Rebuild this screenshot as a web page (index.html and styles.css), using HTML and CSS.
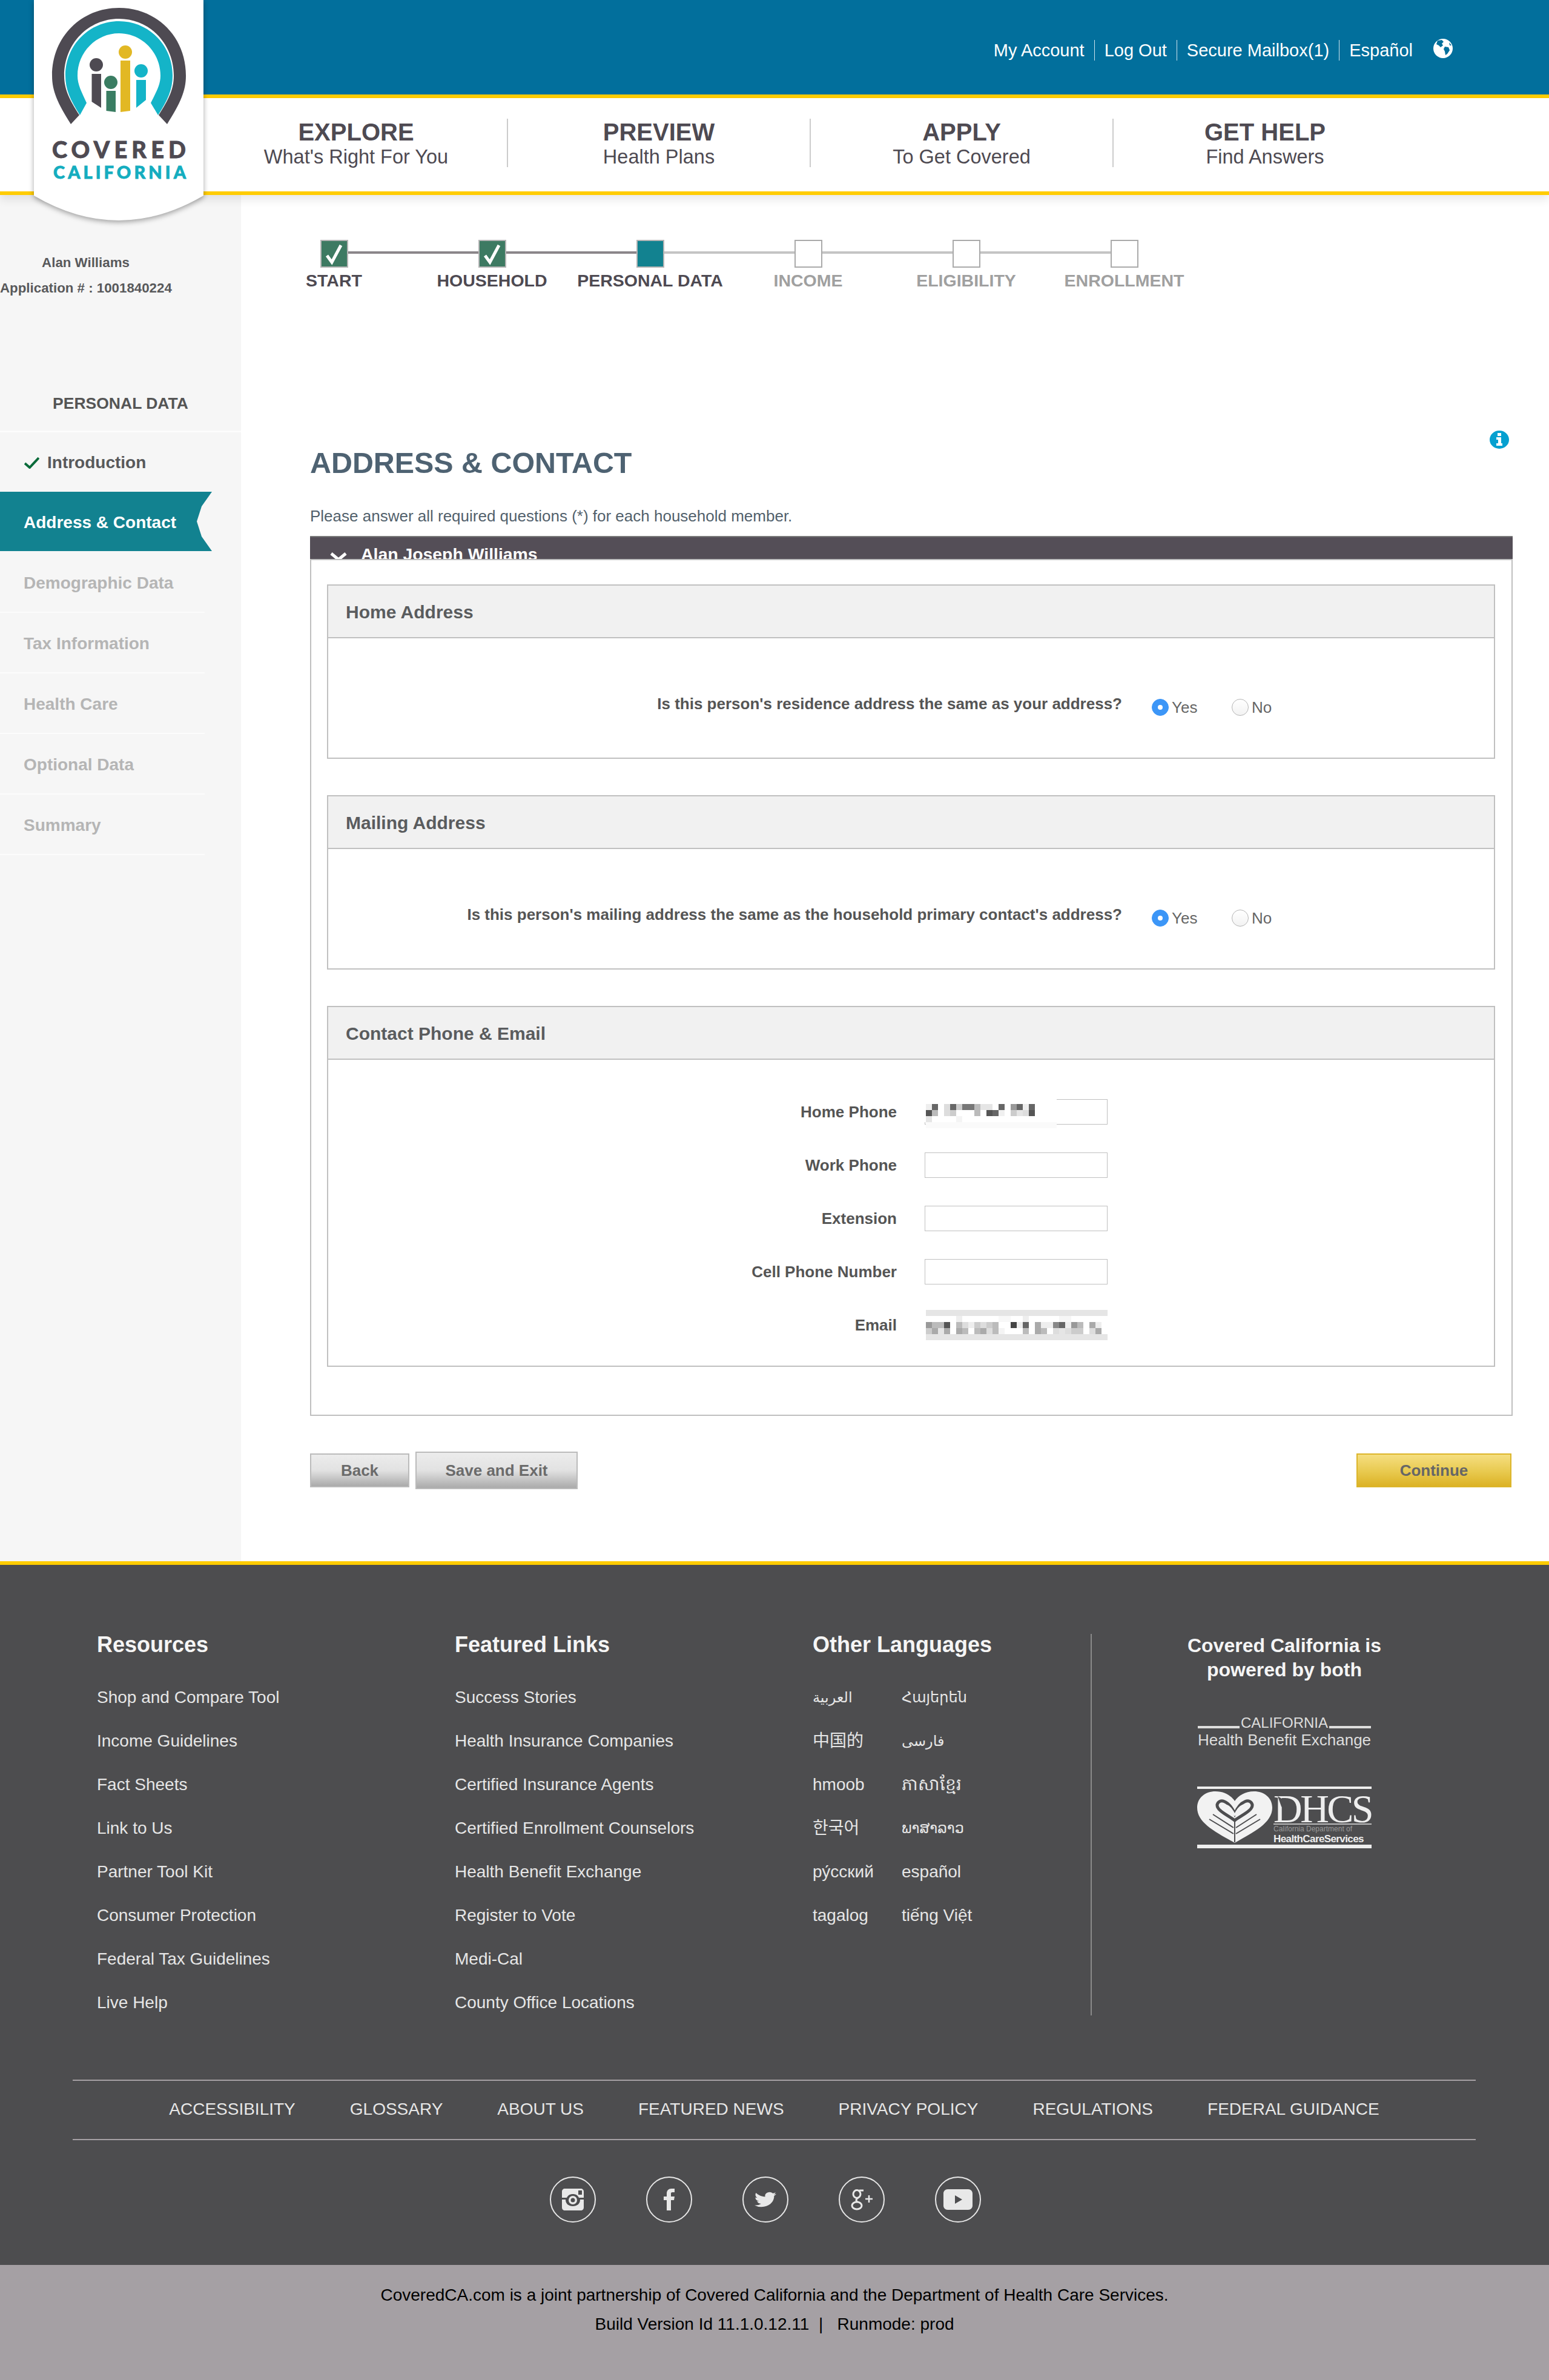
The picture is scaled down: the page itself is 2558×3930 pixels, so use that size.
FILE: index.html
```html
<!DOCTYPE html>
<html lang="en">
<head>
<meta charset="utf-8">
<title>Covered California - Address &amp; Contact</title>
<link rel="stylesheet" href="styles.css">
</head>
<body>
<header class="site-header">
  <svg class="logo" viewBox="56 0 280 375" width="280" height="375" aria-label="Covered California">
    <path class="logo-shield" d="M56 0H336V323Q196 405 56 323Z"/>
    <path fill="#4e4a52" d="M117 205C95 170 86 150 86 125C86 60 135 13 196.5 13C258 13 307 60 307 125C307 150 298 170 276 205L262 190C278 165 287 148 287 125C287 72 247 31 196.5 31C146 31 106 72 106 125C106 148 115 165 131 190Z"/>
    <path fill="#14b4c8" d="M132 190C116 165 108 148 108 125C108 74 148 35 196.5 35C245 35 285 74 285 125C285 148 277 165 261 190L249 170C258 152 265 140 265 125C265 86 234 55 196.5 55C159 55 128 86 128 125C128 140 135 152 143 170Z"/>
    <circle cx="159" cy="107" r="11" fill="#4e4a52"/>
    <path fill="#4e4a52" d="M151.500 122H167V178L151.500 168Z"/>
    <circle cx="183" cy="136" r="11" fill="#3a7d62"/>
    <path fill="#3a7d62" d="M175.500 150H191V185L175.500 183Z"/>
    <circle cx="207" cy="86" r="11" fill="#e2b824"/>
    <path fill="#e2b824" d="M199 100H215V183L199 185Z"/>
    <circle cx="233" cy="117" r="11" fill="#14b4c8"/>
    <path fill="#14b4c8" d="M225 132H241V165L225 178Z"/>
    <text class="logo-covered" x="86" y="261" textLength="221" lengthAdjust="spacing">COVERED</text>
    <text class="logo-california" x="88" y="295" textLength="219" lengthAdjust="spacing">CALIFORNIA</text>
  </svg>
  <div class="topbar">
    <nav class="top-links">
      <a class="top-link">My Account</a>
      <a class="top-link">Log Out</a>
      <a class="top-link">Secure Mailbox(1)</a>
      <a class="top-link top-link-last">Español</a>
      <svg class="globe" viewBox="0 0 32 32" width="32" height="32" aria-hidden="true">
        <circle cx="16" cy="16" r="16" fill="#fff"/>
        <path fill="#026f9c" d="M7 3L14 2L17 5L14 8L16 11L12 14L9 11L5 9ZM19 13L25 14L27 19L23 25L20 27L19 21L17 17ZM26 6L30 11L27 11Z"/>
      </svg>
    </nav>
  </div>
  <nav class="main-nav">
    <a class="nav-col"><strong class="nav-title">EXPLORE</strong><span class="nav-sub">What's Right For You</span></a>
    <a class="nav-col"><strong class="nav-title">PREVIEW</strong><span class="nav-sub">Health Plans</span></a>
    <a class="nav-col"><strong class="nav-title">APPLY</strong><span class="nav-sub">To Get Covered</span></a>
    <a class="nav-col nav-col-last"><strong class="nav-title">GET HELP</strong><span class="nav-sub">Find Answers</span></a>
  </nav>
</header>

<div class="layout">
  <aside class="sidebar">
    <div class="user-info">
      <div>Alan Williams</div>
      <div>Application # : 1001840224</div>
    </div>
    <h2 class="side-heading">PERSONAL DATA</h2>
    <ul class="side-list">
      <li class="side-item side-done">
        <svg class="side-check" viewBox="0 0 25 20" width="25" height="20" aria-hidden="true"><path d="M1 11L9 18L24 2" fill="none" stroke="#0a6b3a" stroke-width="4"/></svg>
        Introduction
      </li>
      <li class="side-item side-active">Address &amp; Contact</li>
      <li class="side-item">Demographic Data</li>
      <li class="side-item">Tax Information</li>
      <li class="side-item">Health Care</li>
      <li class="side-item">Optional Data</li>
      <li class="side-item">Summary</li>
    </ul>
  </aside>

  <main class="content">
    <ol class="stepper">
      <li class="step step-done"><span class="step-box"><svg viewBox="0 0 42 42" width="42" height="42" aria-hidden="true"><path d="M9 24L17 35L32 7" fill="none" stroke="#fff" stroke-width="5"/></svg></span><span class="step-label">START</span></li>
      <li class="step step-done"><span class="step-box"><svg viewBox="0 0 42 42" width="42" height="42" aria-hidden="true"><path d="M9 24L17 35L32 7" fill="none" stroke="#fff" stroke-width="5"/></svg></span><span class="step-label">HOUSEHOLD</span></li>
      <li class="step step-current"><span class="step-box"></span><span class="step-label">PERSONAL DATA</span></li>
      <li class="step"><span class="step-box"></span><span class="step-label">INCOME</span></li>
      <li class="step"><span class="step-box"></span><span class="step-label">ELIGIBILITY</span></li>
      <li class="step step-last"><span class="step-box"></span><span class="step-label">ENROLLMENT</span></li>
    </ol>

    <div class="title-row">
      <h1 class="page-title">ADDRESS &amp; CONTACT</h1>
      <svg class="info-icon" viewBox="0 0 32 30" width="32" height="30" aria-hidden="true">
        <ellipse cx="16" cy="15" rx="16" ry="15" fill="#06a0d0"/>
        <path fill="#fff" d="M13 4H19V9H13ZM11 11H19V21H21V25H11V21H14V15H11Z"/>
      </svg>
    </div>
    <p class="instructions">Please answer all required questions (*) for each household member.</p>

    <div class="member-bar">
      <svg class="chevron" viewBox="0 0 28 16" width="28" height="16" aria-hidden="true"><path d="M2 2L14 12L26 2" fill="none" stroke="#fff" stroke-width="5"/></svg>
      <span class="member-name">Alan Joseph Williams</span>
    </div>

    <div class="member-panel">
      <section class="card card-short">
        <h3 class="card-head">Home Address</h3>
        <div class="question">
          <span class="q-label">Is this person's residence address the same as your address?</span>
          <span class="radio-opt"><i class="radio radio-on"></i>Yes</span>
          <span class="radio-opt"><i class="radio"></i>No</span>
        </div>
      </section>
      <section class="card card-short">
        <h3 class="card-head">Mailing Address</h3>
        <div class="question">
          <span class="q-label">Is this person's mailing address the same as the household primary contact's address?</span>
          <span class="radio-opt"><i class="radio radio-on"></i>Yes</span>
          <span class="radio-opt"><i class="radio"></i>No</span>
        </div>
      </section>
      <section class="card card-tall">
        <h3 class="card-head">Contact Phone &amp; Email</h3>
        <div class="fields">
          <div class="field">
            <span class="f-label">Home Phone</span>
            <span class="f-input">
              <svg class="blur-phone" viewBox="0 0 218 48" width="218" height="48" shape-rendering="crispEdges" aria-hidden="true">
                <rect width="218" height="38" fill="#fff"/>
                <rect x="2" y="38" width="216" height="10" fill="#fafafa"/>
                <rect x="2" y="8" width="10" height="10" fill="#eee"/><rect x="12" y="8" width="10" height="10" fill="#666"/><rect x="32" y="8" width="10" height="10" fill="#ddd"/><rect x="42" y="8" width="10" height="10" fill="#666"/><rect x="52" y="8" width="10" height="10" fill="#ccc"/><rect x="62" y="8" width="20" height="10" fill="#777"/><rect x="82" y="8" width="10" height="10" fill="#bbb"/><rect x="92" y="8" width="20" height="10" fill="#e5e5e5"/><rect x="122" y="8" width="10" height="10" fill="#666"/><rect x="142" y="8" width="10" height="10" fill="#999"/><rect x="152" y="8" width="10" height="10" fill="#666"/><rect x="162" y="8" width="10" height="10" fill="#eee"/><rect x="172" y="8" width="10" height="10" fill="#666"/>
                <rect x="2" y="18" width="10" height="10" fill="#555"/><rect x="12" y="18" width="10" height="10" fill="#bbb"/><rect x="32" y="18" width="10" height="10" fill="#ddd"/><rect x="42" y="18" width="10" height="10" fill="#ccc"/><rect x="82" y="18" width="10" height="10" fill="#bbb"/><rect x="102" y="18" width="10" height="10" fill="#555"/><rect x="112" y="18" width="10" height="10" fill="#666"/><rect x="122" y="18" width="10" height="10" fill="#f0f0f0"/><rect x="142" y="18" width="10" height="10" fill="#ccc"/><rect x="152" y="18" width="10" height="10" fill="#e5e5e5"/><rect x="162" y="18" width="10" height="10" fill="#ddd"/><rect x="172" y="18" width="10" height="10" fill="#555"/>
                <rect x="2" y="28" width="10" height="10" fill="#e5e5e5"/><rect x="52" y="28" width="10" height="10" fill="#f4f4f4"/>
              </svg>
            </span>
          </div>
          <div class="field"><span class="f-label">Work Phone</span><span class="f-input"></span></div>
          <div class="field"><span class="f-label">Extension</span><span class="f-input"></span></div>
          <div class="field"><span class="f-label">Cell Phone Number</span><span class="f-input"></span></div>
          <div class="field field-email">
            <span class="f-label">Email</span>
            <svg class="blur-email" viewBox="0 0 300 50" width="300" height="50" shape-rendering="crispEdges" aria-hidden="true">
              <rect width="300" height="10" fill="#e5e5e5"/><rect y="40" width="300" height="10" fill="#e5e5e5"/>
              <rect x="50" y="10" width="10" height="10" fill="#eee"/><rect x="120" y="10" width="20" height="10" fill="#f8f8f8"/><rect x="160" y="10" width="10" height="10" fill="#eee"/><rect x="220" y="10" width="20" height="10" fill="#f6f6f6"/>
              <rect y="20" width="10" height="10" fill="#999"/><rect x="10" y="20" width="20" height="10" fill="#bbb"/><rect x="30" y="20" width="10" height="10" fill="#555"/><rect x="50" y="20" width="10" height="10" fill="#bbb"/><rect x="60" y="20" width="10" height="10" fill="#ddd"/><rect x="70" y="20" width="10" height="10" fill="#eee"/><rect x="80" y="20" width="10" height="10" fill="#ccc"/><rect x="90" y="20" width="10" height="10" fill="#ddd"/><rect x="100" y="20" width="10" height="10" fill="#ccc"/><rect x="110" y="20" width="10" height="10" fill="#bbb"/><rect x="140" y="20" width="10" height="10" fill="#444"/><rect x="150" y="20" width="10" height="10" fill="#eee"/><rect x="160" y="20" width="10" height="10" fill="#666"/><rect x="180" y="20" width="10" height="10" fill="#aaa"/><rect x="190" y="20" width="20" height="10" fill="#eee"/><rect x="210" y="20" width="10" height="10" fill="#888"/><rect x="220" y="20" width="10" height="10" fill="#666"/><rect x="230" y="20" width="10" height="10" fill="#eee"/><rect x="240" y="20" width="10" height="10" fill="#999"/><rect x="250" y="20" width="10" height="10" fill="#bbb"/><rect x="270" y="20" width="10" height="10" fill="#aaa"/><rect x="280" y="20" width="10" height="10" fill="#eee"/>
              <rect y="30" width="10" height="10" fill="#ccc"/><rect x="10" y="30" width="10" height="10" fill="#aaa"/><rect x="20" y="30" width="10" height="10" fill="#e5e5e5"/><rect x="30" y="30" width="10" height="10" fill="#aaa"/><rect x="50" y="30" width="10" height="10" fill="#aaa"/><rect x="60" y="30" width="10" height="10" fill="#bbb"/><rect x="80" y="30" width="10" height="10" fill="#bbb"/><rect x="90" y="30" width="10" height="10" fill="#aaa"/><rect x="100" y="30" width="10" height="10" fill="#ddd"/><rect x="110" y="30" width="10" height="10" fill="#bbb"/><rect x="120" y="30" width="10" height="10" fill="#f4f4f4"/><rect x="160" y="30" width="10" height="10" fill="#bbb"/><rect x="180" y="30" width="10" height="10" fill="#aaa"/><rect x="190" y="30" width="10" height="10" fill="#bbb"/><rect x="210" y="30" width="10" height="10" fill="#ddd"/><rect x="220" y="30" width="10" height="10" fill="#e5e5e5"/><rect x="230" y="30" width="10" height="10" fill="#ddd"/><rect x="240" y="30" width="20" height="10" fill="#ccc"/><rect x="270" y="30" width="10" height="10" fill="#ddd"/><rect x="280" y="30" width="10" height="10" fill="#aaa"/>
            </svg>
          </div>
        </div>
      </section>
    </div>

    <div class="actions">
      <button class="btn btn-back">Back</button>
      <button class="btn btn-save">Save and Exit</button>
      <button class="btn btn-continue">Continue</button>
    </div>
  </main>
</div>

<footer class="site-footer">
  <div class="foot-cols">
    <div class="foot-col">
      <h4 class="foot-title">Resources</h4>
      <ul class="foot-list">
        <li>Shop and Compare Tool</li><li>Income Guidelines</li><li>Fact Sheets</li><li>Link to Us</li><li>Partner Tool Kit</li><li>Consumer Protection</li><li>Federal Tax Guidelines</li><li>Live Help</li>
      </ul>
    </div>
    <div class="foot-col">
      <h4 class="foot-title">Featured Links</h4>
      <ul class="foot-list">
        <li>Success Stories</li><li>Health Insurance Companies</li><li>Certified Insurance Agents</li><li>Certified Enrollment Counselors</li><li>Health Benefit Exchange</li><li>Register to Vote</li><li>Medi-Cal</li><li>County Office Locations</li>
      </ul>
    </div>
    <div class="foot-col foot-col-lang">
      <h4 class="foot-title">Other Languages</h4>
      <ul class="foot-list foot-langs">
        <li class="lang-small">العربية</li><li class="lang-small">Հայերեն</li>
        <li>中国的</li><li class="lang-small">فارسی</li>
        <li>hmoob</li><li>ភាសាខ្មែរ</li>
        <li>한국어</li><li class="lang-small">ພາສາລາວ</li>
        <li>ру́сский</li><li>español</li>
        <li>tagalog</li><li>tiếng Việt</li>
      </ul>
    </div>
    <div class="foot-partners">
      <h4 class="partners-title">Covered California is powered by both</h4>
      <div class="chbe">
        <div class="chbe-top"><span class="chbe-rule"></span>CALIFORNIA<span class="chbe-rule"></span></div>
        <div class="chbe-name">Health Benefit Exchange</div>
      </div>
      <svg class="dhcs" viewBox="0 0 288 102" width="288" height="102" aria-label="DHCS">
        <rect width="288" height="4" fill="#eee"/>
        <rect y="96" width="288" height="6" fill="#eee"/>
        <path fill="#f2f2f2" d="M62 93C30 75 0 60 0 35C0 18 14 8 30 8C45 8 56 15 62 24C68 15 79 8 94 8C110 8 124 18 124 35C124 60 94 75 62 93Z"/>
        <path fill="none" stroke="#4d4d4f" stroke-width="5" d="M33 30C36 19 52 22 62 45C72 22 88 19 91 30C92 40 72 48 62 56C52 48 32 40 33 30Z"/>
        <path fill="#f2f2f2" d="M47 30C52 29 58 36 62 44C66 36 72 29 77 30C78 36 68 44 62 49C56 44 46 36 47 30Z"/>
        <path fill="none" stroke="#4d4d4f" stroke-width="2" d="M62 56V92M20 54L60 78M26 46L60 68M104 54L64 78M98 46L64 68"/>
        <text class="dhcs-letters" x="126" y="59">DHCS</text>
        <path fill="#4d4d4f" d="M133 16L143 22L146 40L139 33Z"/>
        <rect x="126" y="61" width="162" height="2" fill="#bbb"/>
        <text class="dhcs-tiny" x="126" y="74">California Department of</text>
        <text class="dhcs-small" x="126" y="92">HealthCareServices</text>
      </svg>
    </div>
  </div>

  <nav class="foot-nav">
    <a>ACCESSIBILITY</a><a>GLOSSARY</a><a>ABOUT US</a><a>FEATURED NEWS</a><a>PRIVACY POLICY</a><a>REGULATIONS</a><a>FEDERAL GUIDANCE</a>
  </nav>

  <div class="social">
    <a class="social-btn"><svg viewBox="0 0 36 36" width="36" height="36" aria-hidden="true"><path fill="#e8e8e8" fill-rule="evenodd" d="M5 0H31C34 0 36 2 36 5V15H28C26 11 23 9 18 9C13 9 10 11 8 15H0V5C0 2 2 0 5 0ZM27 3V10H33V3ZM0 18H6C6 25 11 29 18 29C25 29 30 25 30 18H36V31C36 34 34 36 31 36H5C2 36 0 34 0 31ZM18 12A7 7 0 1 1 18 26A7 7 0 1 1 18 12ZM18 15.500A3.500 3.500 0 1 0 18 22.500A3.500 3.500 0 1 0 18 15.500Z"/></svg></a>
    <a class="social-btn"><svg viewBox="0 0 24 36" width="24" height="36" aria-hidden="true"><path fill="#e8e8e8" d="M8 36V19H3V13H8V8C8 3 11 0 16 0H21V6H18C15 6 15 7 15 9V13H21L20 19H15V36Z"/></svg></a>
    <a class="social-btn"><svg viewBox="0 0 24 24" width="36" height="30" preserveAspectRatio="none" aria-hidden="true"><path fill="#e8e8e8" d="M23.953 4.570a10 10 0 01-2.825.775 4.958 4.958 0 002.163-2.723c-.951.555-2.005.959-3.127 1.184a4.920 4.920 0 00-8.384 4.482C7.690 8.095 4.067 6.130 1.640 3.162a4.822 4.822 0 00-.666 2.475c0 1.710.870 3.213 2.188 4.096a4.904 4.904 0 01-2.228-.616v.060a4.923 4.923 0 003.946 4.827 4.996 4.996 0 01-2.212.085 4.936 4.936 0 004.604 3.417 9.867 9.867 0 01-6.102 2.105c-.390 0-.779-.023-1.170-.067a13.995 13.995 0 007.557 2.209c9.053 0 13.998-7.496 13.998-13.985 0-.210 0-.420-.015-.630A9.935 9.935 0 0024 4.590z"/></svg></a>
    <a class="social-btn"><svg viewBox="0 0 36 36" width="36" height="36" aria-hidden="true"><g fill="none" stroke="#e8e8e8" stroke-width="3"><ellipse cx="10" cy="9" rx="6" ry="6.500"/><ellipse cx="10" cy="28" rx="8" ry="6"/><path d="M14 3H21M12 15C8 18 8 20 11 22"/><path stroke-width="2.500" d="M24 17H36M30 11V23"/></g></svg></a>
    <a class="social-btn"><svg viewBox="0 0 48 34" width="48" height="34" aria-hidden="true"><path fill="#e8e8e8" fill-rule="evenodd" d="M7 0H41C45 0 48 3 48 7V27C48 31 45 34 41 34H7C3 34 0 31 0 27V7C0 3 3 0 7 0ZM19 10V24L31 17Z"/></svg></a>
  </div>

  <div class="sub-footer">
    <p>CoveredCA.com is a joint partnership of Covered California and the Department of Health Care Services.</p>
    <p>Build Version Id 11.1.0.12.11&nbsp; |&nbsp;&nbsp; Runmode: prod</p>
  </div>
</footer>
</body>
</html>
```

FILE: styles.css
```css
* { box-sizing: border-box; }
html, body { margin: 0; padding: 0; }
body {
  width: 2558px;
  font-family: "Liberation Sans", "DejaVu Sans", "Noto Sans CJK SC", "Noto Sans", sans-serif;
  background: #fff;
  color: #4e4a52;
}
ul, ol { list-style: none; margin: 0; padding: 0; }
h1, h2, h3, h4, p { margin: 0; }

/* Header */
.site-header { position: relative; z-index: 3; }
.logo { position: absolute; left: 56px; top: 0; z-index: 5; overflow: visible; }
.logo-shield { fill: #fff; filter: drop-shadow(0 3px 4px rgba(0,0,0,.35)); }
.logo-covered { font: 900 38px "Lato", "Liberation Sans", sans-serif; fill: #4e4a52; stroke: #4e4a52; stroke-width: .8px; }
.logo-california { font: 900 29px "Lato", "Liberation Sans", sans-serif; fill: #14adbf; stroke: #14adbf; stroke-width: .8px; }
.topbar {
  height: 162px;
  background: #026f9c;
  border-bottom: 6px solid #ffcc00;
  padding: 66px 159px 0 0;
}
.top-links { display: flex; justify-content: flex-end; align-items: flex-start; color: #fff; }
.top-link {
  font-size: 29px;
  line-height: 34px;
  padding: 0 16px;
  border-right: 1px solid #cfe3ec;
}
.top-link-last { border-right: 0; }
.globe { margin: -2px 0 0 18px; }
.main-nav {
  display: flex;
  height: 160px;
  padding: 34px 0 0 339px;
  background: #fff;
  border-bottom: 6px solid #ffcc00;
  box-shadow: 0 8px 14px rgba(0,0,0,.09);
}
.nav-col {
  display: flex;
  flex-direction: column;
  align-items: center;
  width: 500px;
  height: 80px;
  border-right: 2px solid #ccc;
}
.nav-col-last { border-right: 0; }
.nav-title { font-size: 40px; line-height: 44px; font-weight: 700; }
.nav-sub { font-size: 32.5px; line-height: 38px; }

/* Layout */
.layout { display: flex; min-height: 2256px; }
.sidebar { flex: 0 0 398px; background: #f6f6f6; }
.user-info {
  width: 283px;
  padding-top: 91px;
  text-align: center;
  font-size: 22.3px;
  line-height: 42px;
  font-weight: 700;
  color: #58595b;
  white-space: nowrap;
}
.side-heading {
  margin-top: 149px;
  padding-bottom: 25px;
  border-bottom: 3px solid #fcfcfc;
  text-align: center;
  font-size: 26.5px;
  line-height: 40px;
  font-weight: 700;
  color: #555;
}
.side-item {
  display: flex;
  align-items: center;
  width: 338px;
  height: 100px;
  padding: 3px 0 0 39px;
  border-bottom: 2px solid #fcfcfc;
  font-size: 28px;
  font-weight: 700;
  color: #b5b5b5;
}
.side-done { height: 98px; padding-bottom: 2px; border-bottom: 0; color: #58595b; }
.side-check { margin: 0 13px 0 1px; }
.side-active {
  width: 350px;
  height: 98px;
  margin-bottom: 2px;
  border-bottom: 0;
  color: #fff;
  background: #128290;
  clip-path: polygon(0 0, 350px 0, 333px 24px, 325px 49px, 333px 74px, 350px 98px, 0 98px);
}

/* Content */
.content { flex: 1; padding: 74px 60px 0 114px; }
.stepper { display: flex; margin-left: -91px; }
.step {
  position: relative;
  flex: 0 0 261px;
  display: flex;
  flex-direction: column;
  align-items: center;
}
.step::after {
  content: "";
  position: absolute;
  left: 50%;
  top: 19px;
  width: 100%;
  height: 4px;
  background: #c4c4c4;
}
.step-done::after { background: #8b868a; }
.step-last::after { display: none; }
.step-box {
  position: relative;
  z-index: 1;
  width: 46px;
  height: 46px;
  background: #fff;
  border: 2px solid #aaa;
}
.step-box svg { display: block; }
.step-done .step-box { background: #3d7a62; border-color: #b5b5b5; }
.step-current .step-box { background: #128290; border-color: #b5b5b5; }
.step-label {
  margin-top: 5px;
  font-size: 28.5px;
  line-height: 32px;
  font-weight: 700;
  color: #a0a0a0;
  white-space: nowrap;
}
.step-done .step-label, .step-current .step-label { color: #4e4a52; }

.title-row {
  display: flex;
  justify-content: space-between;
  align-items: flex-start;
  margin-top: 232px;
  height: 76px;
  padding-right: 6px;
}
.page-title {
  margin-top: 29px;
  font-size: 48.4px;
  line-height: 48px;
  font-weight: 700;
  color: #4e6272;
}
.instructions {
  margin-top: 50px;
  font-size: 26px;
  line-height: 30px;
  color: #52616c;
}
.member-bar {
  position: relative;
  height: 38px;
  margin-top: 18px;
  overflow: hidden;
  background: #544e57;
  border-top: 2px solid #777;
}
.chevron { position: absolute; left: 33px; top: 25px; }
.member-name {
  position: absolute;
  left: 84px;
  top: 12px;
  font-size: 28.4px;
  line-height: 33px;
  font-weight: 700;
  color: #fff;
  white-space: nowrap;
}
.member-panel {
  display: flex;
  flex-direction: column;
  gap: 60px;
  height: 1415px;
  padding: 40px 27px 0 26px;
  border: 2px solid #bfbfbf;
}
.card { border: 2px solid #c0c0c0; }
.card-short { height: 288px; }
.card-tall { height: 596px; }
.card-head {
  height: 87px;
  padding-left: 29px;
  background: #f1f1f1;
  border-bottom: 2px solid #c0c0c0;
  font-size: 30px;
  line-height: 88px;
  font-weight: 700;
  color: #5a5c5e;
}
.question {
  display: flex;
  align-items: flex-start;
  padding-top: 93px;
}
.q-label {
  flex: 0 0 1311px;
  text-align: right;
  font-size: 26px;
  line-height: 30px;
  font-weight: 700;
  color: #555;
}
.radio-opt {
  display: flex;
  align-items: center;
  flex: 0 0 132px;
  margin-top: 6px;
  font-size: 26px;
  line-height: 30px;
  color: #666;
}
.q-label + .radio-opt { margin-left: 49px; }
.radio {
  position: relative;
  flex: 0 0 28px;
  width: 28px;
  height: 28px;
  margin-right: 5px;
  border-radius: 50%;
  background: linear-gradient(#fff, #f2f2f2);
  border: 1px solid #b5b5b5;
}
.radio-on { background: #3c96f7; border-color: #3c96f7; }
.radio-on::after {
  content: "";
  position: absolute;
  left: 9px;
  top: 9px;
  width: 8px;
  height: 8px;
  border-radius: 50%;
  background: #fff;
}
.fields { display: flex; flex-direction: column; gap: 46px; padding-top: 65px; }
.field { display: flex; align-items: center; height: 42px; }
.f-label {
  flex: 0 0 939px;
  margin-right: 46px;
  text-align: right;
  font-size: 26px;
  font-weight: 700;
  color: #555;
}
.f-input {
  position: relative;
  width: 302px;
  height: 42px;
  background: #fff;
  border: 1px solid #c0c0c0;
}
.blur-phone { position: absolute; left: -1px; top: -1px; }
.field-email { height: 50px; margin-top: -4px; }
.blur-email { margin-left: 2px; }

.actions {
  display: flex;
  align-items: center;
  gap: 10px;
  height: 62px;
  margin: 59px 2px 0 0;
}
.btn {
  height: 56px;
  padding: 0;
  font: 700 26px "Liberation Sans", sans-serif;
  color: #6b6b6b;
  border: 2px solid #bbb;
  background: linear-gradient(#ececec, #e2e2e2 50%, #aaa);
}
.btn-back { width: 164px; }
.btn-save { width: 268px; height: 62px; }
.btn-continue {
  width: 256px;
  margin-left: auto;
  color: #666;
  border-color: #dcb52a;
  background: linear-gradient(#f5de80, #e8c94e 55%, #dcb225);
}

/* Footer */
.site-footer {
  height: 1352px;
  background: #4d4d4f;
  border-top: 6px solid #ffcc00;
  color: #e6e6e6;
}
.foot-cols { display: flex; height: 744px; padding: 114px 0 0 160px; }
.foot-col { flex: 0 0 591px; }
.foot-col-lang { flex-basis: 459px; }
.foot-title {
  font-size: 36px;
  line-height: 36px;
  font-weight: 700;
  color: #f5f5f5;
  white-space: nowrap;
}
.foot-list { margin-top: 49px; font-size: 28px; line-height: 40px; }
.foot-list li { height: 72px; white-space: nowrap; }
.foot-langs { display: grid; grid-template-columns: 147px 1fr; }
.lang-small { font-size: 24px; }
.foot-partners {
  flex: 0 0 638px;
  height: 630px;
  display: flex;
  flex-direction: column;
  align-items: center;
  border-left: 2px solid #8a8a8a;
}
.partners-title {
  width: 360px;
  margin-top: -1px;
  text-align: center;
  font-size: 32px;
  line-height: 40px;
  font-weight: 700;
  color: #f5f5f5;
}
.chbe { margin-top: 56px; color: #ddd; }
.chbe-top {
  display: flex;
  align-items: flex-end;
  gap: 2px;
  font-size: 24px;
  line-height: 24px;
}
.chbe-rule { flex: 1; height: 4px; margin-bottom: 3px; background: #ddd; }
.chbe-name { font-size: 26px; line-height: 32px; white-space: nowrap; }
.dhcs { margin-top: 61px; }
.dhcs-letters { font: 400 66px "Liberation Serif", serif; letter-spacing: -3.500px; fill: #eee; }
.dhcs-tiny { font: 400 12px "Liberation Sans", sans-serif; fill: #999; }
.dhcs-small { font: 700 17px "Liberation Sans", sans-serif; letter-spacing: -.6px; fill: #eee; }

.foot-nav {
  display: flex;
  justify-content: center;
  gap: 90px;
  width: 2317px;
  height: 100px;
  margin: 106px 0 0 120px;
  border-top: 2px solid #a5a0a4;
  border-bottom: 2px solid #a5a0a4;
  font-size: 28px;
  line-height: 94px;
  white-space: nowrap;
}
.social { display: flex; justify-content: center; gap: 83px; margin-top: 60px; padding-right: 30px; }
.social-btn {
  display: flex;
  align-items: center;
  justify-content: center;
  width: 76px;
  height: 76px;
  border: 2px solid #e6e6e6;
  border-radius: 50%;
}
.sub-footer {
  height: 190px;
  margin-top: 70px;
  padding-top: 26px;
  background: #a5a0a4;
  color: #000;
  text-align: center;
  font-size: 28px;
  line-height: 48px;
}
```
